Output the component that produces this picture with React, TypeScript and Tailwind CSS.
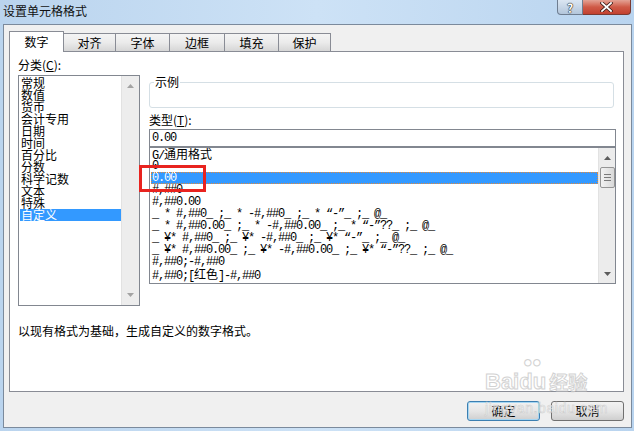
import React from "react";

const categories = [
  "常规",
  "数值",
  "货币",
  "会计专用",
  "日期",
  "时间",
  "百分比",
  "分数",
  "科学记数",
  "文本",
  "特殊",
  "自定义",
];

const cjk = "tracking-normal font-['Noto_Sans_CJK_SC',sans-serif]";

const formats: React.ReactNode[] = [
  <>
    G/<span className={cjk}>通用格式</span>
  </>,
  "0",
  "0.00",
  "#,##0",
  "#,##0.00",
  "_ * #,##0_ ;_ * -#,##0_ ;_ * “-”_ ;_ @_",
  "_ * #,##0.00_ ;_ * -#,##0.00_ ;_ * “-”??_ ;_ @_",
  "_ ¥* #,##0_ ;_ ¥* -#,##0_ ;_ ¥* “-”_ ;_ @_",
  "_ ¥* #,##0.00_ ;_ ¥* -#,##0.00_ ;_ ¥* “-”??_ ;_ @_",
  "#,##0;-#,##0",
  <>
    #,##0;[<span className={cjk}>红色</span>]-#,##0
  </>,
];

const tabs = [
  { label: "对齐", w: "w-[52px]" },
  { label: "字体", w: "w-[54px]" },
  { label: "边框", w: "w-[55px]" },
  { label: "填充", w: "w-[54px]" },
  { label: "保护", w: "w-[52px]" },
];

const Arrow = ({ up, color }: { up?: boolean; color: string }) => (
  <svg width="7" height="4" viewBox="0 0 7 4">
    <polygon points={up ? "0,4 7,4 3.5,0" : "0,0 7,0 3.5,4"} fill={color} />
  </svg>
);

export default function App() {
  return (
    <div className="relative w-[634px] h-[431px] overflow-hidden flex flex-col bg-gradient-to-r from-[#bad4ee] via-[#cde2f6] to-[#b9d4ef] text-[12px] text-black font-['Noto_Sans_CJK_SC','Noto_Sans',sans-serif]">
      {/* title bar */}
      <div className="h-[24px] flex justify-between">
        <div className="pl-[3px] pt-[4px] leading-[14px] text-[12px] text-[#111]">
          设置单元格格式
        </div>
        <div className="flex items-start pr-[3px]">
          <div className="w-[26px] h-[15px] flex items-center justify-center rounded-bl-[4px] border border-t-0 border-[#6e7d90] bg-gradient-to-b from-[#dbe6f2] to-[#b3c6db] text-white font-bold leading-[13px] text-[12px] [text-shadow:0_0_1px_#222,0_0_1px_#222,0_0_1px_#222]">
            ?
          </div>
          <div className="w-[48px] h-[15px] flex items-center justify-center rounded-br-[4px] border border-t-0 border-l-0 border-[#7a3a32] bg-gradient-to-b from-[#e3a295] via-[#cf5a47] to-[#c2412f]">
            <svg width="13" height="10" viewBox="0 0 13 10">
              <path
                d="M2 1 L11 9 M11 1 L2 9"
                stroke="#3a1b16"
                strokeWidth="3.4"
                strokeLinecap="square"
              />
              <path
                d="M2 1 L11 9 M11 1 L2 9"
                stroke="#ffffff"
                strokeWidth="1.8"
                strokeLinecap="square"
              />
            </svg>
          </div>
        </div>
      </div>

      {/* dialog body */}
      <div className="ml-[3px] mr-[2px] mb-[3px] flex-1 border border-[#7b8a9c] bg-[#f0f0f0] flex flex-col">
        {/* tabs */}
        <div className="pt-[6px] pl-[5px] flex items-end h-[26px]">
          <div className="relative z-10 -mb-px w-[55px] h-[21px] flex items-center justify-center bg-white border-x border-t border-[#898c95]">
            数字
          </div>
          {tabs.map((t) => (
            <div
              key={t.label}
              className={`${t.w} h-[18px] flex items-center justify-center border-t border-r border-[#898c95] bg-gradient-to-b from-[#f4f4f4] via-[#ebebeb] to-[#d6d6d6]`}
            >
              {t.label}
            </div>
          ))}
        </div>

        {/* panel */}
        <div className="ml-[5px] w-[615px] h-[341px] border border-[#898c95] bg-white pt-[7px] pl-[8px]">
          <div className="flex items-start gap-[9px]">
            {/* category list */}
            <div className="w-[122px] flex flex-col">
              <div className="leading-[12px] h-[12px]">
                分类(<span className="underline">C</span>):
              </div>
              <div className="mt-[4px] h-[231px] border border-[#828790] flex">
                <div className="flex-1 pl-[1px] pt-[1px]">
                  {categories.map((c) => (
                    <div
                      key={c}
                      className={`h-[12px] leading-[12px] pl-[1px] whitespace-nowrap ${
                        c === "自定义" ? "bg-[#3399ff] text-white" : ""
                      }`}
                    >
                      {c}
                    </div>
                  ))}
                </div>
                <div className="w-[18px] bg-[#ededed] border-l border-[#e2e2e2] flex flex-col justify-between items-center py-[8px]">
                  <Arrow up color="#a3a3a3" />
                  <Arrow color="#a3a3a3" />
                </div>
              </div>
            </div>

            {/* right column */}
            <div className="w-[467px] flex flex-col">
              <div className="relative mt-[23px] w-[465px] h-[26px] rounded-[3px] border border-[#d5dfe5]">
                <span className="absolute left-[4px] -top-[7px] bg-white px-[1px] leading-[12px]">
                  示例
                </span>
              </div>
              <div className="mt-[6px] leading-[12px] h-[12px]">
                类型(<span className="underline">T</span>):
              </div>
              <div className="mt-[3px] h-[18px] border border-[#828790] pl-[2px] leading-[16px] font-['Liberation_Mono',monospace] tracking-[-1.2px]">
                0.00
              </div>
              <div className="h-[137px] border border-[#828790] flex">
                <div className="flex-1 pl-[1px]">
                  {formats.map((f, i) => (
                    <div
                      key={i}
                      className={`h-[12px] leading-[12px] pl-[1px] whitespace-pre font-['Liberation_Mono','Noto_Sans_CJK_SC',monospace] tracking-[-1.2px] ${
                        i === 2
                          ? "bg-[#3399ff] text-white outline-1 outline-dotted outline-[#e58a3a] -outline-offset-1"
                          : ""
                      }`}
                    >
                      {f}
                    </div>
                  ))}
                </div>
                <div className="w-[17px] bg-[#ececec] border-l border-[#e2e2e2] flex flex-col items-center">
                  <div className="h-[19px] flex items-center">
                    <Arrow up color="#5c5c5c" />
                  </div>
                  <div className="w-[15px] h-[21px] rounded-[2px] border border-[#959595] bg-gradient-to-r from-[#f2f2f2] to-[#d9d9d9] flex flex-col items-center justify-center gap-[2px]">
                    <div className="w-[7px] h-px bg-[#7a7a7a]" />
                    <div className="w-[7px] h-px bg-[#7a7a7a]" />
                    <div className="w-[7px] h-px bg-[#7a7a7a]" />
                  </div>
                  <div className="flex-1" />
                  <div className="h-[19px] flex items-center">
                    <Arrow color="#5c5c5c" />
                  </div>
                </div>
              </div>
            </div>
          </div>

          <div className="mt-[18px] leading-[14px]">
            以现有格式为基础，生成自定义的数字格式。
          </div>
        </div>

        {/* buttons */}
        <div className="mt-[9px] pr-[7px] flex justify-end gap-[11px]">
          <div className="w-[73px] h-[20px] rounded-[3px] border border-[#3c7fb1] bg-gradient-to-b from-[#f2f2f2] via-[#e6e6e6] to-[#cfcfcf] flex items-center justify-center leading-[14px] shadow-[inset_0_0_0_1px_#a6d6f2]">
            确定
          </div>
          <div className="w-[73px] h-[20px] rounded-[3px] border border-[#707070] bg-gradient-to-b from-[#f2f2f2] via-[#e6e6e6] to-[#cfcfcf] flex items-center justify-center leading-[14px]">
            取消
          </div>
        </div>
      </div>

      {/* annotation */}
      <div className="absolute left-[139px] top-[165px] w-[67px] h-[27px] border-[3px] border-[#e8231f]" />

      {/* watermark */}
      <div className="absolute left-[485px] top-[360px] pointer-events-none opacity-80 font-['Liberation_Sans',sans-serif] text-white [-webkit-text-stroke:1px_#c8c8c8]">
        <div className="flex items-end text-[22px] font-bold leading-[22px] h-[33px]">
          <span>Bai</span>
          <span className="relative">
            <span className="absolute left-[4px] -top-[17px] text-[15px] leading-[15px]">●●</span>
            du
          </span>
          <span className="ml-[3px] font-['Noto_Sans_CJK_SC',sans-serif] text-[19px]">经验</span>
        </div>
        <div className="mt-[8px] text-[14px] leading-[14px] tracking-[0.6px] [-webkit-text-stroke:0.6px_#c8c8c8]">
          jingyan.baidu.com
        </div>
      </div>
    </div>
  );
}
